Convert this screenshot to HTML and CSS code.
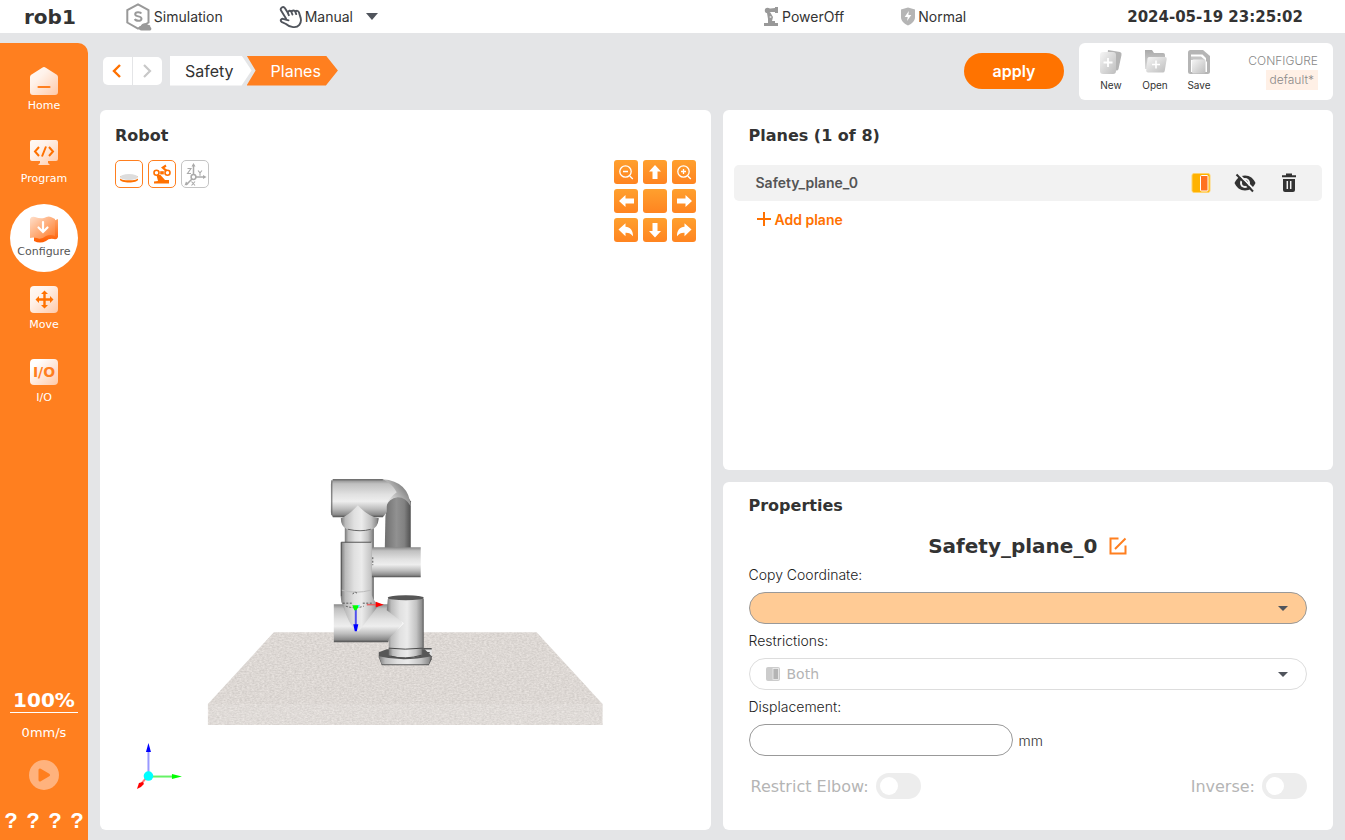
FILE: index.html
```html
<!DOCTYPE html>
<html lang="en">
<head>
<meta charset="utf-8">
<title>rob1 - Safety Planes</title>
<link rel="stylesheet" href="styles.css">
</head>
<body>
<svg class="defs" width="0" height="0" aria-hidden="true">
  <defs>
    <linearGradient id="peach" x1="0" y1="0" x2="1" y2="1"><stop offset="0" stop-color="#fffaf6"/><stop offset=".35" stop-color="#fff2ea"/><stop offset="1" stop-color="#ffc9a8"/></linearGradient>
    <linearGradient id="map" x1="0" y1="0" x2="1" y2="1"><stop offset="0" stop-color="#ffe0cc"/><stop offset="1" stop-color="#ff7c2a"/></linearGradient>
    <linearGradient id="mapBack" x1="0" y1="0" x2="0" y2="1"><stop offset="0" stop-color="#ffa266"/><stop offset="1" stop-color="#ff5c00"/></linearGradient>
    <linearGradient id="grey" x1="0" y1="0" x2="1" y2="1"><stop offset="0" stop-color="#f6f6f6"/><stop offset="1" stop-color="#bdbdbd"/></linearGradient>
    <linearGradient id="greyDark" x1="0" y1="0" x2="0" y2="1"><stop offset="0" stop-color="#a9a9a9"/><stop offset="1" stop-color="#dedede"/></linearGradient>
  </defs>
</svg>

<header class="topbar">
  <strong class="robot-name">rob1</strong>
  <div class="status status-sim">
    <svg width="26" height="28" viewBox="0 0 26 28"><path d="M12 1.3 22.500 7.200V19.500L12 25.500 1.300 19.500V7.200Z" fill="none" stroke="#999" stroke-width="2"/><path d="M15.300 10.500C14.500 8.800 9.200 8.500 9.200 11.200c0 3 6.300 1.300 6.300 4.500 0 3-5.800 2.500-6.700.3" fill="none" stroke="#999" stroke-width="2"/><path d="M15.500 27.500c-3.300 0-3.700-3.900-.8-4.400.8-3.500 6-3.800 7.200-1.400 2.300 0 2.700 1.300 2.300 2.300 2 1 1.200 3.500-.7 3.500Z" fill="#999"/></svg>
    <span>Simulation</span>
  </div>
  <button class="status status-mode" type="button">
    <svg width="24" height="24" viewBox="0 0 24 24"><path d="M7 13.500 2.200 5.800C.5 3 4.300.7 6 3.300l2.800 4.500C9.200 5.300 11.600 5 12.400 7c.7-1.900 3.300-2 4-.1.900-1.700 3-1.300 3.600.6l1.700 5.600c1.300 5.800-2.700 9.300-6.900 9-3.600.3-5.800-1.300-7.800-3.100l-4.500-2.200c-1.500-1.200-.4-3.200 1.400-3l5.600 1.500M8.800 7.800l1 2.400M12.400 7l1 2.500M16.400 6.900l.8 2.200" fill="none" stroke="#50545c" stroke-width="1.900" stroke-linecap="round" stroke-linejoin="round"/></svg>
    <span>Manual</span>
    <i class="caret caret-lg"></i>
  </button>
  <div class="status status-power">
    <svg width="17" height="19" viewBox="0 0 17 19"><circle cx="4.500" cy="3.500" r="2.700" fill="#999"/><path d="M5 1.700 12 1V0h3v6h-3V5L6 5ZM4 6l3-1 3 5-1 4h3v2h3v3H1v-3h4v-4Z" fill="#999"/><circle cx="7.500" cy="10" r="1" fill="#ddd"/></svg>
    <span>PowerOff</span>
  </div>
  <div class="status status-safety">
    <svg width="16" height="19" viewBox="0 0 16 19"><path d="M8 .5 15 2.500V10c0 4-3 6.500-7 8.500C4 16.500 1 14 1 10V2.500Z" fill="#b5b5b5"/><path d="M8.800 4 4.700 10h3l-.6 4 4.200-6H8.400Z" fill="#fff"/></svg>
    <span>Normal</span>
  </div>
  <time class="clock">2024-05-19 23:25:02</time>
</header>

<div class="shell">
  <aside class="sidebar">
    <nav class="nav">
      <a href="#home"><svg width="28" height="28" viewBox="0 0 28 28"><path d="M12.200.7a3 3 0 0 1 3.600 0l11 7A3 3 0 0 1 28 10v15a3 3 0 0 1-3 3H3a3 3 0 0 1-3-3V10a3 3 0 0 1 1.200-2.300Z" fill="url(#peach)"/><path d="M8.500 20h11" stroke="#ff7f1f" stroke-width="2.200" stroke-linecap="round"/></svg><span>Home</span></a>
      <a href="#program"><svg width="28" height="26" viewBox="0 0 28 26"><path d="M2 0h24a2 2 0 0 1 2 2v17a2 2 0 0 1-2 2h-8v2l2 2H8l2-2v-2H2a2 2 0 0 1-2-2V2a2 2 0 0 1 2-2Z" fill="url(#peach)"/><path d="m9 7-4 4.500L9 16M19 7l4 4.500L19 16M16 6.500l-4 10" fill="none" stroke="#ff7100" stroke-width="2"/></svg><span>Program</span></a>
      <a href="#configure" class="active" aria-current="page"><svg width="30" height="28" viewBox="0 0 30 28"><path d="M5 6q7 2 12-2 6 3 12 0v18q-1 3-4 2-5-1-8 2-6 3-12 0Z" fill="url(#mapBack)"/><path d="M1 4q1-3 5-2 5 2 9 1 5-3 9 0l2 1v17q-5-2-9 0-5 4-9 2-4-1-7 0Z" fill="url(#map)"/><path d="M14 7v9M9.500 12.500 14 17l4.500-4.500" fill="none" stroke="#fff" stroke-width="2.200" stroke-linecap="round"/></svg><span>Configure</span></a>
      <a href="#move"><svg width="28" height="27" viewBox="0 0 28 27"><rect width="28" height="27" rx="4" fill="url(#peach)"/><path d="M14.500 7v13M8 13.500h13" stroke="#ff7100" stroke-width="2.400"/><path d="m14.500 4.500 3.500 3.500h-7Zm0 18L11 19h7ZM5.500 13.500 9 10v7Zm18 0L20 17v-7Z" fill="#ff7100"/></svg><span>Move</span></a>
      <a href="#io"><span class="io-tile" aria-hidden="true">I/O</span><span>I/O</span></a>
    </nav>
    <div class="sidebar-foot">
      <button class="speed" type="button">100%</button>
      <span class="velocity">0mm/s</span>
      <button class="play" type="button" aria-label="Play"><svg width="14" height="16" viewBox="0 0 14 16"><path d="M3 3v10L11.500 8Z" fill="#ff7f1f" stroke="#ff7f1f" stroke-width="3" stroke-linejoin="round"/></svg></button>
      <div class="unknowns"><span>?</span><span>?</span><span>?</span><span>?</span></div>
    </div>
  </aside>

  <main class="main">
    <div class="toolbar">
      <div class="history">
        <button type="button" aria-label="Back"><svg width="10" height="14" viewBox="0 0 10 14"><path d="M8 1 2 7l6 6" fill="none" stroke="#ff7100" stroke-width="2.400"/></svg></button>
        <button type="button" aria-label="Forward" disabled><svg width="10" height="14" viewBox="0 0 10 14"><path d="m2 1 6 6-6 6" fill="none" stroke="#c8c8c8" stroke-width="2.200"/></svg></button>
      </div>
      <nav class="crumbs" aria-label="Breadcrumb"><a href="#safety">Safety</a><a href="#planes" class="current" aria-current="page">Planes</a></nav>
      <button class="apply" type="button">apply</button>
      <section class="files">
        <button type="button"><svg width="24" height="26" viewBox="0 0 24 26"><path d="m9 1 12 2q2 .5 1.500 3l-3 14q-.5 2-3 1.500L7 20Z" fill="#b4b4b4"/><rect x="1" y="3" width="16" height="22" rx="3" fill="url(#grey)"/><path d="M9 9v9M4.500 13.500h9" stroke="#fff" stroke-width="1.800"/></svg><span>New</span></button>
        <button type="button"><svg width="24" height="26" viewBox="0 0 24 26"><path d="M2 1h7l2 3h9q2 0 2 2v14H2Z" fill="url(#greyDark)"/><path d="M6 8h16q2 0 1.700 2l-2 12q-.3 1.500-2 1.500H5q-2 0-1.800-2L4.500 9.500Q4.700 8 6 8Z" fill="url(#grey)"/><path d="M13 11.500v8M9 15.500h8" stroke="#fff" stroke-width="1.600"/></svg><span>Open</span></button>
        <button type="button"><svg width="24" height="26" viewBox="0 0 24 26"><path d="M3.500 1H16l7 6v15.500q0 2.500-2.500 2.500h-17Q1 25 1 22.500v-19Q1 1 3.500 1Z" fill="#b5b5b5"/><path d="M4 5.500h11.500L19 9v3.500h1V23H4Z" fill="#fff"/><path d="M4 7.500h10l4 3.500H4Z" fill="#c4c4c4"/><rect x="5" y="10.500" width="13.500" height="14" rx="1.500" fill="url(#grey)"/></svg><span>Save</span></button>
        <div class="config"><span>CONFIGURE</span><span class="config-name">default*</span></div>
      </section>
    </div>

    <div class="panels">
      <section class="panel robot-panel">
        <h2>Robot</h2>
        <div class="view-tools">
          <div class="toggles">
            <button type="button" aria-label="Show base"><svg width="20" height="20" viewBox="0 0 20 20"><path d="M1 12v3.500c0 4 18 4 18 0V12Z" fill="#ff7100"/><path d="M.5 12.500v1c0 3.800 19 3.800 19 0v-1" fill="#fff"/><ellipse cx="10" cy="13" rx="9" ry="3" fill="#ddd"/></svg></button>
            <button type="button" aria-label="Show robot"><svg width="20" height="20" viewBox="0 0 20 20"><path d="M2 17.500 6 17 4.500 11h4l4.500 5h4v3.500H2ZM9 3.500 13.500.5l1 2-2 1.500 2.500 1.500-1.500 2Z" fill="#ff7100"/><circle cx="4.500" cy="8.800" r="2.500" fill="#fff" stroke="#ff7100" stroke-width="1.600"/><circle cx="15.500" cy="8.800" r="2.500" fill="#fff" stroke="#ff7100" stroke-width="1.600"/><path d="M8.200 7.200h3.600v3.200H8.200Z" fill="#ff7100"/></svg></button>
            <button type="button" class="off" aria-label="Show axes"><svg width="24" height="24" viewBox="0 0 24 24" fill="none" stroke="#aaa" stroke-width="1.500"><path d="M10.500 13V3M13 15h9M9 17l-6 6"/><circle cx="10.500" cy="15" r="2.400"/><path d="m10.500 1-2 3.500h4ZM23.500 15 20 13v4ZM1.500 23.500l1.500-4 2.500 2.500Z" fill="#aaa" stroke="none"/><path d="M4.500 6.500h3.500l-3.500 5H8M15 8.500l2 2.300 2-2.300M17 10.800v3M8.500 19.500l3.500 4M12 19.500l-3.500 4" stroke-width="1.100"/></svg></button>
          </div>
          <div class="pad">
            <button type="button" aria-label="Zoom out"><svg viewBox="0 0 24 24"><circle cx="11.500" cy="11.500" r="5.700"/><path d="m15.800 16 3 3M9 11.500h5"/></svg></button>
            <button type="button" aria-label="Up"><svg class="solid" viewBox="0 0 24 24"><path d="m12 5 6 6.500h-3.500V19h-5v-7.500H6Z"/></svg></button>
            <button type="button" aria-label="Zoom in"><svg viewBox="0 0 24 24"><circle cx="11.500" cy="11.500" r="5.700"/><path d="m15.800 16 3 3M9 11.500h5M11.500 9v5"/></svg></button>
            <button type="button" aria-label="Left"><svg class="solid" viewBox="0 0 24 24"><path d="m5 12 6.500-6v3.500H20v5h-8.500V18Z"/></svg></button>
            <button type="button" aria-label="Center"></button>
            <button type="button" aria-label="Right"><svg class="solid" viewBox="0 0 24 24"><path d="m20 12-6.500-6v3.500H5v5h8.500V18Z"/></svg></button>
            <button type="button" aria-label="Rotate left"><svg class="solid" viewBox="0 0 24 24"><path d="m4.500 11.500 7-6.300v3.500c4.500.3 7.700 3.500 7.500 9.500-2-2.700-4.500-3.700-7.500-3.500v3.500Z"/></svg></button>
            <button type="button" aria-label="Down"><svg class="solid" viewBox="0 0 24 24"><path d="m12 19.500-6-6.500h3.500V5h5v8H18Z"/></svg></button>
            <button type="button" aria-label="Rotate right"><svg class="solid" viewBox="0 0 24 24"><path d="m19.500 11.500-7-6.300v3.500C8 9 4.800 12.200 5 18.200c2-2.700 4.500-3.700 7.500-3.500v3.500Z"/></svg></button>
          </div>
        </div>
        <svg class="scene" viewBox="100 242 611 588" preserveAspectRatio="xMidYMax meet" role="img" aria-label="3D view of the robot arm on its table">
          <defs>
            <filter id="stone" x="0" y="0" width="1" height="1" color-interpolation-filters="sRGB"><feTurbulence type="fractalNoise" baseFrequency=".4 .7" numOctaves="3" seed="4"/><feColorMatrix values=".15 0 0 0 .79  .15 0 0 0 .77  .15 0 0 0 .755  0 0 0 0 1"/><feComposite in2="SourceGraphic" operator="in"/></filter>
            <linearGradient id="vert" x1="0" x2="1" y1="0" y2="0"><stop offset="0" stop-color="#777"/><stop offset=".12" stop-color="#bbb"/><stop offset=".35" stop-color="#e0e0e0"/><stop offset=".55" stop-color="#ebebeb"/><stop offset=".8" stop-color="#c3c3c3"/><stop offset=".95" stop-color="#8d8d8d"/><stop offset="1" stop-color="#555"/></linearGradient>
            <linearGradient id="horz" x1="0" x2="0" y1="0" y2="1"><stop offset="0" stop-color="#888"/><stop offset=".12" stop-color="#c0c0c0"/><stop offset=".4" stop-color="#e1e1e1"/><stop offset=".58" stop-color="#eee"/><stop offset=".78" stop-color="#bdbdbd"/><stop offset=".93" stop-color="#8b8b8b"/><stop offset="1" stop-color="#505050"/></linearGradient>
            <linearGradient id="dark" x1="0" x2="1" y1="0" y2="0"><stop offset="0" stop-color="#707070"/><stop offset=".45" stop-color="#919191"/><stop offset=".75" stop-color="#818181"/><stop offset="1" stop-color="#505050"/></linearGradient>
            <linearGradient id="elbow" x1="0" x2="1" y1="1" y2="0"><stop offset="0" stop-color="#eaeaea"/><stop offset=".4" stop-color="#d8d8d8"/><stop offset=".7" stop-color="#979797"/><stop offset="1" stop-color="#555"/></linearGradient>
          </defs>
          <path d="M274 632H537L603 704V725H208V704Z" fill="#ded9d6" filter="url(#stone)"/>
          <path d="M208 704H603V725H208Z" fill="#fff" fill-opacity=".1"/>
          <path d="M422 648h10v9h-10Z" fill="#e4e4e4"/><path d="M422 648.500h10M426 652.500h4" stroke="#555" stroke-width="1.500"/>
          <path d="M379 657v-5l8-3h38l7 7v3l-3 6h-47Z" fill="#575757"/>
          <path d="M379 656q12 3 25 3t28-3l-3 8h-47Z" fill="url(#vert)"/>
          <path d="M345 525h29v80h-29Z" fill="url(#vert)"/>
          <path d="M386 499q5-4 12-4 10 0 13 6v48h-26Z" fill="url(#dark)"/>
          <path d="M383 479q26 2 28 27-5-9-13-9-9 1-12 10v8l-4 2Z" fill="url(#elbow)"/>
          <path d="M333 479h50q10 5 14 13-7 5-10 12v8l-4 5h-50l-2-5v-28Z" fill="url(#horz)"/>
          <path d="M333 479.500h50M332 480v35" fill="none" stroke="#5d5d5d"/>
          <path d="M341 518q8-3 17-13 10 11 21 13-1 11-8 11-13 3-24 0-6-3-6-11Z" fill="url(#vert)"/>
          <path d="M348 529q13 3 23 0" fill="none" stroke="#666"/>
          <path d="M372 547h49v30h-49Z" fill="url(#horz)"/>
          <path d="M334 604h57l12 19-15 19h-54Z" fill="url(#horz)"/>
          <path d="M388 599q1-4 18-4t18 4v50q-18 8-35 0v-8l-2-1q9-8 17-17-9-7-17-13Z" fill="url(#vert)"/>
          <ellipse cx="406" cy="597.500" rx="18" ry="2.500" fill="#565656"/>
          <path d="M389 648q16 2 34 0v7q-16 5-34 0Z" fill="url(#vert)"/><path d="M389 648q16 2 34 0M391 656q14 4 31-1" fill="none" stroke="#4b4b4b"/>
          <path d="M341 542h31v53q2 6 7 10l-20 26q-8-1-16-26-2-3-2-8Z" fill="url(#vert)"/>
          <path d="M341.500 542h30M341.500 542v54" stroke="#555" fill="none"/><path d="M342 590q14 4 29 0" stroke="#bbb" fill="none"/>
          <path d="M353 594q2-4 5 0M343 603h9M363 603h9M346 606q9 3 18 0M373 557v8" fill="none" stroke="#555" stroke-dasharray="2 1.500"/>
          <path d="M356 607v20" stroke="#5050ee" stroke-width="2"/><path d="m353.500 624 5 0-1.500 7h-2Z" fill="#00f"/><path d="M367 604.500h10" stroke="#e26464" stroke-width="1.500"/><path d="m376 601.500 8 3-8 2.500Z" fill="#f00"/><path d="M352.500 605h6v2l-2 3h-2Z" fill="#0f0"/><path d="M358 605l2-.5-1 3Z" fill="#0ff"/>
          <path d="M148.500 773v-22" stroke="#99f" stroke-width="2"/><path d="m148.500 743 2.500 9h-5Z" fill="#00f"/><path d="M151 776.500h23" stroke="#66f266" stroke-width="2"/><path d="m182 776.500-10 2.500v-5Z" fill="#0f0"/><path d="m146 778-5 6" stroke="#f77" stroke-width="2"/><path d="m137 789 2-6 4-1 1 2-3 3Z" fill="#f00"/><circle cx="148.500" cy="776" r="4.800" fill="#0ff"/>
        </svg>
      </section>

      <div class="side-panels">
        <section class="panel planes-panel">
          <h2>Planes (1 of 8)</h2>
          <div class="plane-row">
            <span class="plane-name">Safety_plane_0</span>
            <button type="button" aria-label="Restriction side"><svg width="20" height="20" viewBox="0 0 20 20"><rect x="1" y=".5" width="18" height="19" rx="2" fill="#ffb200" stroke="#ffd36b"/><rect x="9.500" y="2.500" width="7.500" height="15.500" rx="1" fill="#ff7121" stroke="#fff"/></svg></button>
            <button type="button" aria-label="Hidden"><svg width="24" height="20" viewBox="0 0 24 20"><path d="M12 2.500c5 0 8.500 3 10.500 7.500-2 4.500-5.500 7.500-10.500 7.500S3.500 14.500 1.500 10C3.500 5.500 7 2.500 12 2.500Z" fill="#333"/><circle cx="12" cy="10" r="5" fill="#f2f2f2"/><circle cx="12" cy="10" r="3" fill="#333"/><path d="M5 .5 21.500 17" stroke="#f2f2f2" stroke-width="2"/><path d="M3.500 1.500 20 18.500" stroke="#333" stroke-width="2"/></svg></button>
            <button type="button" aria-label="Delete"><svg width="16" height="20" viewBox="0 0 16 20"><path d="M1 3.200h14M5 1.500h6" stroke="#333" stroke-width="2"/><path d="M2 6h12v11q0 2-2 2H4q-2 0-2-2Z" fill="#333"/><path d="M6.300 8v8M9.700 8v8" stroke="#f2f2f2" stroke-width="1.500"/></svg></button>
          </div>
          <button class="add-plane" type="button"><svg width="14" height="14" viewBox="0 0 14 14"><path d="M7 0v14M0 7h14" stroke="#ff7100" stroke-width="2"/></svg>Add plane</button>
        </section>

        <section class="panel props-panel">
          <h2>Properties</h2>
          <div class="props-title"><h3>Safety_plane_0</h3><button type="button" aria-label="Rename"><svg width="18" height="18" viewBox="0 0 18 18"><path d="M9.500 1.500h-8v15h15V8.500M6 12 16.500 1.500" fill="none" stroke="#ff7f1f" stroke-width="2"/></svg></button></div>
          <label for="coord">Copy Coordinate:</label>
          <div class="select-wrap"><select id="coord" class="field filled"><option></option></select><i class="caret"></i></div>
          <label for="restr">Restrictions:</label>
          <div class="select-wrap"><select id="restr" class="field with-icon" disabled><option>Both</option></select><svg class="field-icon" width="14" height="14" viewBox="0 0 14 14"><rect width="14" height="14" rx="2" fill="#ccc"/><rect x="7" y="1.500" width="5.500" height="11" fill="#b4b4b4" stroke="#eee" stroke-width=".8"/></svg><i class="caret"></i></div>
          <label for="disp">Displacement:</label>
          <div class="measure"><input id="disp" class="field" type="text"><span>mm</span></div>
          <div class="switches">
            <label>Restrict Elbow:<input class="switch" type="checkbox" disabled></label>
            <label>Inverse:<input class="switch" type="checkbox" disabled></label>
          </div>
        </section>
      </div>
    </div>
  </main>
</div>
</body>
</html>
```
FILE: styles.css
```css
* { box-sizing: border-box; }
html, body { height: 100%; }
body {
  margin: 0;
  display: flex;
  flex-direction: column;
  background: #e4e5e7;
  color: #333;
  font-family: Inter, "Liberation Sans", sans-serif;
  font-size: 14px;
}
.defs { position: absolute; }
button {
  margin: 0;
  padding: 0;
  border: 0;
  background: none;
  color: inherit;
  font: inherit;
  cursor: pointer;
}
button svg { display: block; }
a { color: inherit; text-decoration: none; }
h2, h3 { margin: 0; font-family: "DejaVu Sans", sans-serif; font-weight: 700; }
h2 { font-size: 16px; line-height: 20px; }
h3 { font-size: 20px; line-height: 24px; }

.caret {
  width: 10px;
  height: 6px;
  background: #50545c;
  clip-path: polygon(0 0, 100% 0, 50% 100%);
}
.caret-lg { width: 12px; height: 7px; margin-left: 11px; }

/* Status bar */
.topbar {
  flex: none;
  height: 33px;
  padding: 0 42px 0 24px;
  display: flex;
  align-items: center;
  background: #fff;
}
.robot-name { font: 700 20px "DejaVu Sans", sans-serif; }
.status { display: flex; align-items: center; gap: 2px; }
.status-sim { margin-left: 50px; }
.status-mode { margin-left: 56px; }
.status-power { margin-left: auto; }
.status-safety { margin-left: 56px; }
.clock { margin-left: 161px; font: 700 15px "DejaVu Sans", sans-serif; }

.shell { flex: 1; min-height: 0; display: flex; }

/* Sidebar */
.sidebar {
  flex: none;
  width: 88px;
  margin-top: 10px;
  padding-top: 15px;
  display: flex;
  flex-direction: column;
  justify-content: space-between;
  border-radius: 0 10px 0 0;
  background: #ff7f1f;
  color: #fff;
  font-family: "DejaVu Sans", sans-serif;
}
.nav { display: flex; flex-direction: column; align-items: center; gap: 5px; }
.nav a {
  width: 68px;
  height: 68px;
  padding-top: 9px;
  display: grid;
  grid-template-rows: 32px 14px;
  justify-items: center;
  align-items: start;
  border-radius: 50%;
  font-size: 11px;
  line-height: 14px;
}
.nav .active { background: #fff; color: #555; }
.nav .active svg { margin-top: 2px; }
.io-tile {
  width: 28px;
  height: 26px;
  border-radius: 4px;
  background: linear-gradient(135deg, #fff 20%, #ffc9a8);
  color: #ff7f1f;
  font: 700 14px/26px "DejaVu Sans", sans-serif;
  text-align: center;
}
.sidebar-foot { display: flex; flex-direction: column; align-items: center; }
.speed {
  width: 68px;
  height: 25px;
  border-bottom: 1px solid #fff;
  font-size: 20px;
  font-weight: 700;
  line-height: 24px;
  white-space: nowrap;
}
.velocity { margin-top: 11px; font-size: 13px; line-height: 18px; }
.play {
  width: 30px;
  height: 30px;
  margin-top: 18px;
  display: grid;
  place-items: center;
  border-radius: 50%;
  background: #ffb27d;
}
.unknowns {
  width: 88px;
  margin-top: 19px;
  padding-bottom: 4px;
  display: grid;
  grid-template-columns: repeat(4, 1fr);
  text-align: center;
  font: 700 22px/27px "Liberation Mono", monospace;
}

/* Main area */
.main {
  flex: 1;
  min-width: 0;
  padding: 10px 12px;
  display: flex;
  flex-direction: column;
  gap: 10px;
}
.toolbar { flex: none; display: flex; align-items: center; height: 57px; }
.history, .crumbs, .apply { margin-bottom: 2px; }
.history { display: flex; gap: 1px; margin-left: 3px; }
.history button { width: 29px; height: 28px; padding-right: 2px; display: grid; place-items: center; background: #fff; }
.history button:first-child { border-radius: 5px 0 0 5px; }
.history button:last-child { border-radius: 0 5px 5px 0; }
.crumbs { display: flex; margin-left: 8px; font-size: 16px; line-height: 30px; }
.crumbs a {
  padding: 0 15px;
  background: #fff;
  clip-path: polygon(0 0, calc(100% - 10px) 0, 100% 50%, calc(100% - 10px) 100%, 0 100%);
}
.crumbs a:first-child { padding-right: 18px; }
.crumbs .current {
  margin-left: -5px;
  padding: 0 17px 0 24px;
  background: #ff7f1f;
  color: #fff;
  clip-path: polygon(0 0, calc(100% - 12px) 0, 100% 50%, calc(100% - 12px) 100%, 0 100%, 9px 50%);
}
.apply {
  width: 100px;
  height: 36px;
  margin-left: auto;
  border-radius: 18px;
  background: #ff7300;
  color: #fff;
  font-size: 16px;
  font-weight: 600;
}
.files {
  width: 254px;
  height: 57px;
  margin-left: 15px;
  padding: 0 15px 2px 10px;
  display: flex;
  align-items: center;
  border-radius: 6px;
  background: #fff;
}
.files button {
  width: 44px;
  display: flex;
  flex-direction: column;
  align-items: center;
  gap: 3px;
  font-size: 10px;
  line-height: 14px;
}
.config {
  margin-left: auto;
  display: flex;
  flex-direction: column;
  align-items: flex-end;
  color: #888;
  font-size: 12px;
  font-weight: 300;
  line-height: 18px;
}
.config-name { padding: 0 4px; background: #fff0e6; line-height: 20px; }

.panels { flex: 1; min-height: 0; display: grid; grid-template-columns: 1fr 1fr; gap: 12px; }
.panel { border-radius: 6px; background: #fff; display: flex; flex-direction: column; min-width: 0; }
.side-panels { display: flex; flex-direction: column; gap: 12px; min-width: 0; }

/* Robot view */
.robot-panel { padding-top: 16px; }
.robot-panel h2 { padding-left: 15px; }
.view-tools { margin-top: 14px; padding: 0 15px; display: flex; justify-content: space-between; align-items: flex-start; }
.toggles { display: flex; gap: 5px; }
.toggles button {
  width: 28px;
  height: 28px;
  display: grid;
  place-items: center;
  border: 1px solid #ff7f1f;
  border-radius: 5px;
}
.toggles .off { border-color: #c4c4c4; }
.pad { display: grid; grid-template-columns: repeat(3, 24px); grid-auto-rows: 24px; gap: 5px; }
.pad button { border-radius: 3px; background: linear-gradient(#ffa02e, #ff8420); }
.pad svg { width: 24px; height: 24px; fill: none; stroke: #fff; stroke-width: 1.3; }
.pad .solid { fill: #fff; stroke: none; }
.scene { display: block; width: 100%; flex: 1; min-height: 0; }

/* Planes */
.planes-panel { flex: 1; padding: 16px 11px; }
.planes-panel h2 { padding-left: 15px; }
.plane-row {
  height: 36px;
  margin-top: 19px;
  padding: 0 11px 0 22px;
  display: flex;
  align-items: center;
  border-radius: 5px;
  background: #f2f2f2;
}
.plane-row button { width: 44px; height: 36px; display: grid; place-items: center; }
.plane-name { margin-right: auto; padding-bottom: 2px; color: #555; font-weight: 600; }
.add-plane {
  align-self: flex-start;
  height: 36px;
  margin-left: 23px;
  display: flex;
  align-items: center;
  gap: 4px;
  color: #ff7100;
  font-weight: 600;
}

/* Properties */
.props-panel { flex: none; padding: 14px 26px 31px; }
.props-title { margin: 18px 0 7px; display: flex; justify-content: center; align-items: center; gap: 12px; }
.props-panel > label { font-weight: 300; line-height: 20px; color: #222; }
.select-wrap { position: relative; margin: 7px 0; display: flex; }
.field {
  width: 100%;
  height: 32px;
  padding: 0 16px;
  border: 1px solid #999;
  border-radius: 16px;
  background: #fff;
  color: #333;
  font: 14px "DejaVu Sans", sans-serif;
  appearance: none;
}
.field.filled { background: #ffcb95; }
.field.with-icon { padding-left: 37px; border-color: #ddd; color: #b4b4b4; opacity: 1; }
.field-icon { position: absolute; left: 17px; top: 9px; }
.select-wrap .caret { position: absolute; right: 19px; top: 14px; height: 5px; pointer-events: none; }
.measure { margin-top: 7px; display: flex; align-items: center; gap: 6px; font-weight: 300; }
.measure .field { width: 264px; }
.switches { margin-top: 17px; padding-left: 2px; display: flex; justify-content: space-between; }
.switches label {
  display: flex;
  align-items: center;
  gap: 7px;
  color: #b5b5b5;
  font: 16px "DejaVu Sans", sans-serif;
}
.switch {
  width: 45px;
  height: 26px;
  margin: 0;
  padding: 4px;
  border-radius: 13px;
  background: #ededed;
  appearance: none;
}
.switch::before { content: ""; display: block; width: 18px; height: 18px; border-radius: 50%; background: #fff; }
.switch:checked::before { margin-left: auto; }
```
